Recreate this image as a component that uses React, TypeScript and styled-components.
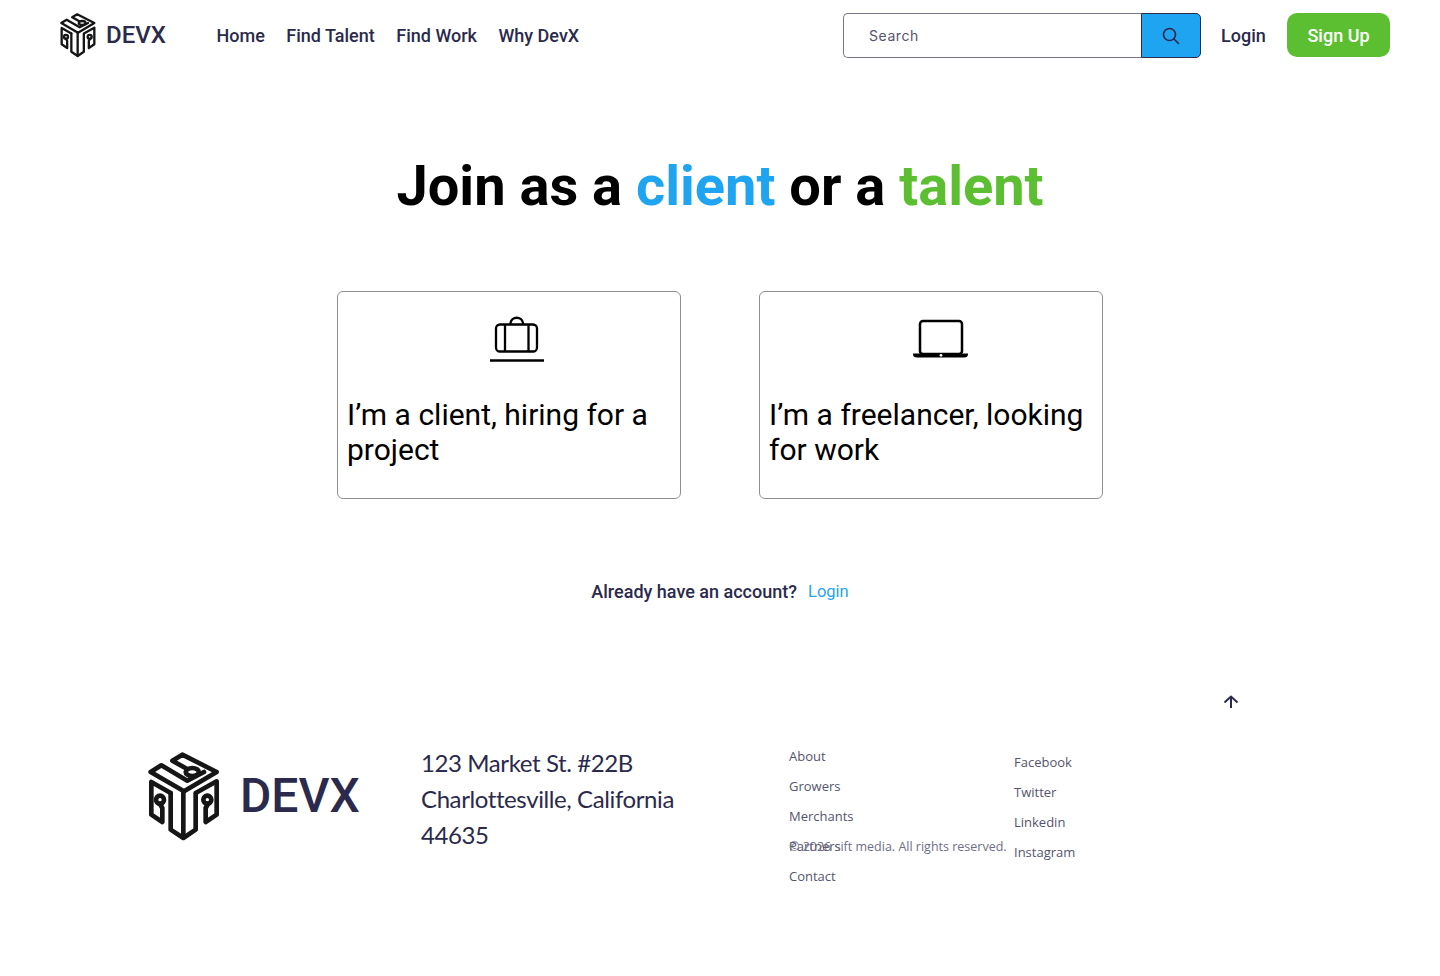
import React from "react";
import styled, { createGlobalStyle } from "styled-components";

const Global = createGlobalStyle`
  html, body { margin: 0; padding: 0; background: #fff; }
  body { font-family: Roboto, "Liberation Sans", sans-serif; }
  * { box-sizing: border-box; }
`;

const INK = "#2b2a4c";

const Page = styled.div`
  width: 1440px;
  height: 976px;
  overflow: hidden;
  display: flex;
  flex-direction: column;
`;
const Header = styled.header`
  height: 71px;
  padding: 13px 50px 0 58px;
  display: flex;
  align-items: flex-start;
`;
const Brand = styled.div`
  display: flex;
  align-items: center;
  gap: 8px;
  height: 43px;
  width: 158.5px;
`;
const BrandName = styled.span<{ $size: number }>`
  font-family: Roboto, sans-serif;
  font-weight: 500;
  font-size: ${(p) => p.$size}px;
  color: ${INK};
  line-height: 1;
`;
const Nav = styled.nav`
  display: flex;
  gap: 21.5px;
  height: 45px;
  align-items: center;
  flex: 1;
`;
const NavLink = styled.a`
  font-size: 18px;
  font-weight: 500;
  color: ${INK};
`;
const Search = styled.div`
  width: 358px;
  height: 45px;
  display: flex;
`;
const SearchInput = styled.div`
  flex: 1;
  padding-left: 25px;
  display: flex;
  align-items: center;
  border: 1px solid #77768c;
  border-right: 0;
  border-radius: 5px 0 0 5px;
  font-family: Inter, sans-serif;
  font-size: 14px;
  letter-spacing: 0.55px;
  color: #55546d;
`;
const SearchButton = styled.div`
  width: 60px;
  background: #1fa4f1;
  border: 1px solid ${INK};
  border-radius: 0 5px 5px 0;
  display: flex;
  align-items: center;
  justify-content: center;
  color: ${INK};
`;
const Login = styled.a`
  margin-left: 20px;
  width: 66px;
  height: 45px;
  display: flex;
  align-items: center;
  font-size: 18px;
  font-weight: 500;
  color: ${INK};
`;
const SignUp = styled.button`
  width: 103px;
  height: 44px;
  background: #5cbf32;
  border: 0;
  border-radius: 10px;
  font-family: Roboto, sans-serif;
  font-size: 18px;
  font-weight: 500;
  color: #fff;
`;
const Title = styled.h1`
  margin: 79px 0 0;
  text-align: center;
  font-size: 56px;
  line-height: 72px;
  font-weight: 700;
  color: #000;
`;
const Accent = styled.span<{ $c: string }>`
  color: ${(p) => p.$c};
`;
const Cards = styled.div`
  margin-top: 69px;
  display: flex;
  justify-content: center;
  gap: 78px;
`;
const Card = styled.div`
  width: 344px;
  height: 208px;
  border: 1px solid #8f8f8f;
  border-radius: 6px;
  padding: 21px 9px 0;
`;
const CardIcon = styled.div<{ $x: number }>`
  height: 53px;
  margin-left: ${(p) => p.$x}px;
`;
const CardText = styled.p`
  margin: 31px 0 0;
  font-size: 30px;
  line-height: 35px;
  color: #000;
`;
const Already = styled.div`
  margin-top: 80px;
  height: 24px;
  display: flex;
  justify-content: center;
  align-items: center;
  gap: 11px;
  font-size: 18px;
`;
const AlreadyText = styled.span`
  font-weight: 500;
  color: ${INK};
`;
const AlreadyLink = styled.a`
  font-size: 16.5px;
  color: #1fa4f1;
`;
const TopRow = styled.div`
  margin-top: 92px;
  padding-left: 1223px;
  height: 16px;
  color: ${INK};
  display: flex;
`;
const Footer = styled.footer`
  margin-top: 31px;
  padding-left: 144px;
  display: flex;
  align-items: flex-start;
`;
const FooterBrand = styled.div`
  width: 277px;
  padding-top: 6px;
  display: flex;
  align-items: center;
  gap: 16px;
`;
const Address = styled.address`
  width: 368px;
  padding-top: 3px;
  font-style: normal;
  font-family: Lato, sans-serif;
  font-size: 24px;
  letter-spacing: -0.4px;
  line-height: 36px;
  color: ${INK};
`;
const LinksCol = styled.ul<{ $w: number; $top: number }>`
  position: relative;
  list-style: none;
  margin: 0;
  padding: ${(p) => p.$top}px 0 0;
  width: ${(p) => p.$w}px;
  display: flex;
  flex-direction: column;
  gap: 12px;
`;
const FLink = styled.li`
  font-family: "Open Sans", sans-serif;
  font-size: 13px;
  line-height: 18px;
  color: #55546d;
`;
const Copy = styled.span`
  position: absolute;
  left: 0;
  top: 96px;
  white-space: nowrap;
  font-family: "Open Sans", sans-serif;
  font-size: 12.5px;
  line-height: 18px;
  color: #6f6e85;
`;

const Logo = ({ w }: { w: number }) => (
  <svg width={w} height={(w * 288) / 240} viewBox="0 0 240 288" fill="none" stroke="#161616" strokeWidth="14" strokeLinejoin="round" strokeLinecap="round">
    <path d="M128 62 L85 38 L115 20 L218 72 L120 130 L20 72 L52 52 L130 98 L180 72" />
    <ellipse cx="145" cy="72" rx="20" ry="12" />
    <path d="M80 135 L22 102 L22 200 L55 222 L55 180 L48 168" />
    <circle cx="48" cy="155" r="12" />
    <path d="M80 135 L80 245 L118 270 L155 245 L155 135 L218 100 L218 200 L185 222 L185 180 L192 168" />
    <circle cx="190" cy="155" r="12" />
    <path d="M118 130 L118 268" />
  </svg>
);

const Briefcase = () => (
  <svg width="56" height="52" viewBox="0 0 56 52" fill="none" stroke="#000" strokeWidth="2.3">
    <rect x="6" y="11.5" width="41" height="27" rx="4" />
    <path d="M15 11.5 V38.5 M38.5 11.5 V38.5" />
    <path d="M20.5 11 V10 A6.3 6 0 0 1 33 10 V11" />
    <path d="M0 47.5 H54" strokeWidth="2.6" />
  </svg>
);
const Laptop = () => (
  <svg width="56" height="48" viewBox="0 0 56 48" fill="none" stroke="#000" strokeWidth="2.5">
    <rect x="7" y="8" width="42" height="33" rx="3" />
    <path d="M0 40.5 H55 V41 Q55 44.5 51 44.5 H4 Q0 44.5 0 41Z" fill="#000" stroke="none" />
    <circle cx="28" cy="42.3" r="1.4" fill="#fff" stroke="none" />
  </svg>
);
const SearchIcon = () => (
  <svg width="18" height="18" viewBox="0 0 18 18" fill="none" stroke="currentColor" strokeWidth="1.7" strokeLinecap="round">
    <circle cx="7.5" cy="7.5" r="6" />
    <path d="M12 12 L16.5 16.5" />
  </svg>
);
const ArrowUp = () => (
  <svg width="16" height="14" viewBox="0 0 16 14" fill="none" stroke="currentColor" strokeWidth="2">
    <path d="M8 13 V2 M1.5 7.5 L8 1.5 L14.5 7.5" />
  </svg>
);

export default function App() {
  return (
    <Page>
      <Global />
      <Header>
        <Brand>
          <Logo w={40} />
          <BrandName $size={24}>DEVX</BrandName>
        </Brand>
        <Nav>
          <NavLink>Home</NavLink>
          <NavLink>Find Talent</NavLink>
          <NavLink>Find Work</NavLink>
          <NavLink>Why DevX</NavLink>
        </Nav>
        <Search>
          <SearchInput>Search</SearchInput>
          <SearchButton><SearchIcon /></SearchButton>
        </Search>
        <Login>Login</Login>
        <SignUp>Sign Up</SignUp>
      </Header>
      <Title>
        Join as a <Accent $c="#1fa4f1">client</Accent> or a <Accent $c="#5cbf32">talent</Accent>
      </Title>
      <Cards>
        <Card>
          <CardIcon $x={143}><Briefcase /></CardIcon>
          <CardText>I’m a client, hiring for a project</CardText>
        </Card>
        <Card>
          <CardIcon $x={144}><Laptop /></CardIcon>
          <CardText>I’m a freelancer, looking for work</CardText>
        </Card>
      </Cards>
      <Already>
        <AlreadyText>Already have an account?</AlreadyText>
        <AlreadyLink>Login</AlreadyLink>
      </Already>
      <TopRow><ArrowUp /></TopRow>
      <Footer>
        <FooterBrand>
          <Logo w={80} />
          <BrandName $size={48}>DEVX</BrandName>
        </FooterBrand>
        <Address>123 Market St. #22B<br />Charlottesville, California<br />44635</Address>
        <LinksCol $w={225} $top={5}>
          <FLink>About</FLink>
          <FLink>Growers</FLink>
          <FLink>Merchants</FLink>
          <FLink>Partners</FLink>
          <FLink>Contact</FLink>
          <Copy>© 2026 sift media. All rights reserved.</Copy>
        </LinksCol>
        <LinksCol $w={120} $top={11}>
          <FLink>Facebook</FLink>
          <FLink>Twitter</FLink>
          <FLink>Linkedin</FLink>
          <FLink>Instagram</FLink>
        </LinksCol>
      </Footer>
    </Page>
  );
}
